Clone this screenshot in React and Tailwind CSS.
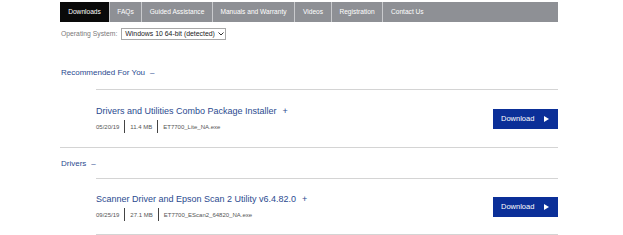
import React from 'react';

const tabs = [
    { label: 'Downloads', w: 'w-[50px]', active: true },
    { label: 'FAQs', w: 'w-[32px]' },
    { label: 'Guided Assistance', w: 'w-[71px]' },
    { label: 'Manuals and Warranty', w: 'w-[82px]' },
    { label: 'Videos', w: 'w-[37px]' },
    { label: 'Registration', w: 'w-[51px]' },
];

const DownloadRow = ({ title, date, size, file, last }) => (
    <div className={`ml-[36px] border-t border-[#d4d4d4] flex items-center justify-between ${last ? 'border-b h-[57px]' : 'h-[58px]'}`}>
        <div className="flex flex-col pt-[2px]">
            <div className="text-[9px] leading-[11px] text-[#2b4a8f] whitespace-nowrap">
                {title}<span className="ml-[6px]">+</span>
            </div>
            <div className="mt-[3px] flex items-center text-[6px] leading-[8px] text-[#555]">
                <span>{date}</span>
                <span className="mx-[5px] w-px h-[13px] bg-[#444]"></span>
                <span>{size}</span>
                <span className="mx-[5px] w-px h-[13px] bg-[#444]"></span>
                <span>{file}</span>
            </div>
        </div>
        <button className="w-[65px] h-[20px] bg-[#0b2f98] text-white text-[7.5px] flex items-center pl-[8px]">
            <span>Download</span>
            <svg className="ml-[10px]" width="5" height="6" viewBox="0 0 5 6">
                <path d="M0 0 L5 3 L0 6 Z" fill="white" />
            </svg>
        </button>
    </div>
);

const App = () => {
    return (
        <div className="w-[623px] h-[235px] bg-white overflow-hidden" style={{ fontFamily: '"Liberation Sans", Arial, sans-serif' }}>
            <div className="ml-[60px] w-[498px]">
                {/* Tabs */}
                <div className="mt-[2px] h-[20px] flex bg-[#8e9095] text-white text-[6.6px]">
                    {tabs.map(t => (
                        <div
                            key={t.label}
                            className={`${t.w} h-full flex items-center justify-center border-r border-[#c9cacd] whitespace-nowrap ${t.active ? 'bg-[#0a0a0a]' : ''}`}
                        >
                            {t.label}
                        </div>
                    ))}
                    <div className="flex-1 h-full flex items-center pl-[8px]">Contact Us</div>
                </div>

                {/* OS select */}
                <div className="mt-[6px] h-[12px] flex items-center">
                    <span className="ml-[1px] text-[6.8px] text-[#7a7a7a]">Operating System:</span>
                    <div className="ml-[4px] w-[105px] h-[12px] border border-[#a8a8a8] flex items-center pl-[3px] text-[6.9px] text-[#222] whitespace-nowrap">
                        Windows 10 64-bit (detected)
                        <svg className="ml-[3px] shrink-0" width="6" height="4" viewBox="0 0 6 4">
                            <path d="M0.5 0.5 L3 3 L5.5 0.5" fill="none" stroke="#333" strokeWidth="1" />
                        </svg>
                    </div>
                </div>

                {/* Recommended */}
                <div className="mt-[19px] border-b border-[#d4d4d4]">
                    <div className="h-[30px] flex items-center pb-[2px] pl-[1px] text-[8px] text-[#2b4a8f]">
                        Recommended For You<span className="ml-[5px]">–</span>
                    </div>
                    <DownloadRow
                        title="Drivers and Utilities Combo Package Installer"
                        date="05/20/19"
                        size="11.4 MB"
                        file="ET7700_Lite_NA.exe"
                    />
                </div>

                {/* Drivers */}
                <div>
                    <div className="h-[30px] flex items-center pt-[2px] pl-[1px] text-[8px] text-[#2b4a8f]">
                        Drivers<span className="ml-[5px]">–</span>
                    </div>
                    <DownloadRow
                        title="Scanner Driver and Epson Scan 2 Utility v6.4.82.0"
                        date="09/25/19"
                        size="27.1 MB"
                        file="ET7700_EScan2_64820_NA.exe"
                        last
                    />
                </div>
            </div>
        </div>
    );
};

export default App;
